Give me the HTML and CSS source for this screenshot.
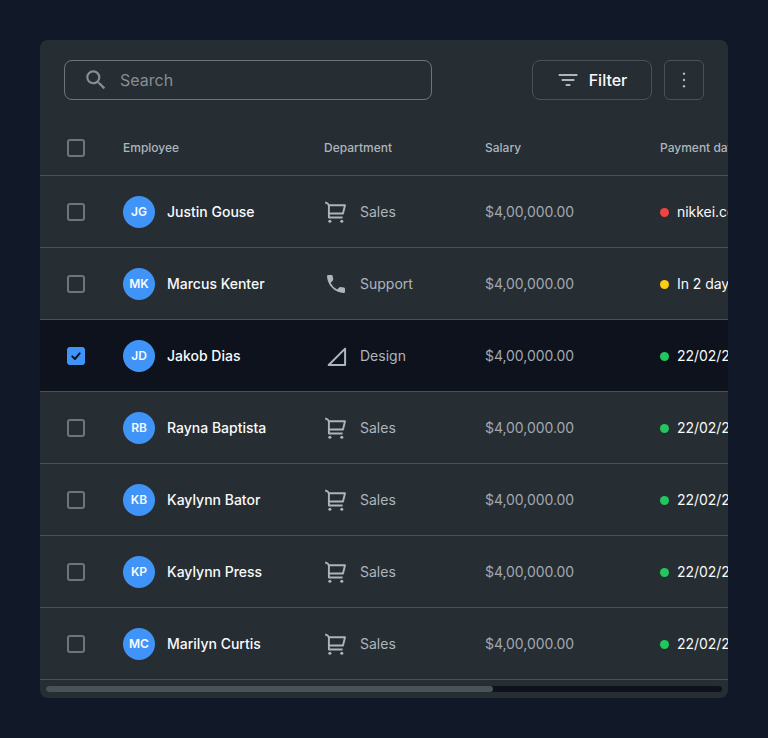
FILE: index.html
```html
<!DOCTYPE html>
<html lang="en">
<head>
<meta charset="utf-8">
<title>Employees</title>
<link rel="stylesheet" href="styles.css">
</head>
<body>
<svg class="defs" aria-hidden="true">
  <symbol id="cart" viewBox="0 0 24 24"><path d="M1.2 2.4L2.9 3.1Q4.9 4 4.9 6V17.5H18.6M4.9 5.3H21L19 13.5H4.9" fill="none" stroke="currentColor" stroke-width="1.9" stroke-linejoin="round"/><circle cx="5.9" cy="21.3" r="1.55"/><circle cx="17.8" cy="21.3" r="1.55"/></symbol>
  <symbol id="phone" viewBox="0 0 24 24"><path d="M4.2 3H7.6Q8.6 3 8.7 4L9.2 7.6Q9.3 8.2 8.9 8.6L6.6 10.9A15 15 0 0 0 13.2 17.4L15.4 15.2Q15.8 14.8 16.4 14.9L20 15.4Q21 15.6 21 16.5V19.8Q21 21 19.8 21C10.8 20.6 3.4 13.2 3 4.2Q3 3 4.2 3z"/></symbol>
  <symbol id="angle" viewBox="0 0 24 24"><path d="M21.1 4.6V21H4.7z" fill="none" stroke="currentColor" stroke-width="2" stroke-linejoin="round"/></symbol>
</svg>
<main class="card">
  <div class="toolbar">
    <label class="search">
      <svg viewBox="0 0 24 24"><path d="M15.5 14h-.79l-.28-.27A6.471 6.471 0 0 0 16 9.5 6.5 6.5 0 1 0 9.5 16c1.61 0 3.09-.59 4.23-1.57l.27.28v.79l5 4.99L20.49 19zm-6 0C7.01 14 5 11.99 5 9.5S7.01 5 9.5 5 14 7.01 14 9.5 11.99 14 9.5 14z"/></svg>
      <input type="text" placeholder="Search">
    </label>
    <button class="btn filter"><svg viewBox="0 0 24 24"><path d="M2.7 6.1h18.7v1.9H2.7zM5.7 11.1h12.7V13H5.7zM9.7 16.1h4.7V18H9.7z"/></svg>Filter</button>
    <button class="btn more" aria-label="More"><svg viewBox="0 0 24 24"><circle cx="12" cy="5.7" r="1.2"/><circle cx="12" cy="12" r="1.2"/><circle cx="12" cy="18.3" r="1.2"/></svg></button>
  </div>
  <div class="row head"><span class="box"></span><span>Employee</span><span>Department</span><span>Salary</span><span>Payment date</span></div>
  <div class="row"><span class="box"></span><div class="person"><span class="avatar">JG</span>Justin Gouse</div><div class="dept"><svg><use href="#cart"/></svg>Sales</div><span class="salary">$4,00,000.00</span><div class="pay red">nikkei.com</div></div>
  <div class="row"><span class="box"></span><div class="person"><span class="avatar">MK</span>Marcus Kenter</div><div class="dept"><svg><use href="#phone"/></svg>Support</div><span class="salary">$4,00,000.00</span><div class="pay yellow">In 2 days</div></div>
  <div class="row selected"><span class="box checked"><svg viewBox="0 0 18 18"><path d="M5.3 9.4l2.6 2.6 4.8-5.6"/></svg></span><div class="person"><span class="avatar">JD</span>Jakob Dias</div><div class="dept"><svg><use href="#angle"/></svg>Design</div><span class="salary">$4,00,000.00</span><div class="pay">22/02/2022</div></div>
  <div class="row"><span class="box"></span><div class="person"><span class="avatar">RB</span>Rayna Baptista</div><div class="dept"><svg><use href="#cart"/></svg>Sales</div><span class="salary">$4,00,000.00</span><div class="pay">22/02/2022</div></div>
  <div class="row"><span class="box"></span><div class="person"><span class="avatar">KB</span>Kaylynn Bator</div><div class="dept"><svg><use href="#cart"/></svg>Sales</div><span class="salary">$4,00,000.00</span><div class="pay">22/02/2022</div></div>
  <div class="row"><span class="box"></span><div class="person"><span class="avatar">KP</span>Kaylynn Press</div><div class="dept"><svg><use href="#cart"/></svg>Sales</div><span class="salary">$4,00,000.00</span><div class="pay">22/02/2022</div></div>
  <div class="row"><span class="box"></span><div class="person"><span class="avatar">MC</span>Marilyn Curtis</div><div class="dept"><svg><use href="#cart"/></svg>Sales</div><span class="salary">$4,00,000.00</span><div class="pay">22/02/2022</div></div>
  <div class="track"><div class="thumb"></div></div>
</main>
</body>
</html>
```
FILE: styles.css
```css
* { box-sizing: border-box; }
body {
  margin: 0;
  padding: 40px;
  background: #111827;
  font-family: Inter, "Liberation Sans", sans-serif;
  color: #f9fafb;
}
svg { fill: currentColor; flex: none; }
.defs { display: none; }
.card {
  width: 688px;
  height: 658px;
  overflow: hidden;
  border-radius: 8px;
  background: #262d33;
}
.toolbar {
  display: flex;
  height: 80px;
  padding: 20px 24px;
}
.search {
  display: flex;
  align-items: center;
  width: 368px;
  height: 40px;
  margin-right: auto;
  padding-left: 18px;
  border: 1px solid #6c757d;
  border-radius: 8px;
  color: #868e96;
}
.search svg { width: 26px; height: 26px; }
.search input {
  width: 280px;
  margin-left: 11px;
  padding: 0;
  border: 0;
  outline: 0;
  background: none;
  color: inherit;
  font: 400 16px Inter, sans-serif;
}
.search input::placeholder { color: #868e96; opacity: 1; }
.btn {
  display: flex;
  align-items: center;
  justify-content: center;
  height: 40px;
  padding: 0;
  border: 1px solid #495057;
  border-radius: 8px;
  background: none;
  color: #f9fafb;
  font: 500 16px Inter, sans-serif;
}
.btn svg { width: 24px; height: 24px; color: #adb5bd; }
.filter { width: 120px; gap: 8px; }
.filter svg { margin: 0 0.5px 0 -0.5px; }
.more { width: 40px; margin-left: 12px; border-radius: 6px; }
.row {
  display: grid;
  grid-template-columns: 56px 201px 161px 175px 160px;
  align-items: center;
  height: 72px;
  padding-left: 27px;
  border-bottom: 1px solid #495057;
  font-size: 14px;
  white-space: nowrap;
}
.head {
  height: 56px;
  color: #adb5bd;
  font-size: 12px;
  font-weight: 500;
}
.selected { background: #0d121c; }
.box {
  width: 18px;
  height: 18px;
  margin-top: 1px;
  border: 2px solid #6c757d;
  border-radius: 3px;
}
.checked { border: 0; background: #4094f7; }
.checked svg {
  display: block;
  width: 18px;
  height: 18px;
  fill: none;
  stroke: #0d121c;
  stroke-width: 2;
  stroke-linecap: round;
  stroke-linejoin: round;
}
.person, .dept, .pay { display: flex; align-items: center; }
.person { gap: 12px; font-weight: 500; }
.avatar {
  display: flex;
  align-items: center;
  justify-content: center;
  width: 32px;
  height: 32px;
  border-radius: 50%;
  background: #4094f7;
  font-size: 12px;
  font-weight: 600;
}
.dept { height: 24px; gap: 12px; color: #adb5bd; }
.dept svg { width: 24px; height: 24px; margin-top: 1px; }
.salary { color: #a1a8b0; letter-spacing: -0.05px; }
.pay { gap: 8px; letter-spacing: -0.05px; }
.pay::before {
  content: "";
  width: 9px;
  height: 9px;
  margin-top: 1px;
  border-radius: 50%;
  background: #22c55e;
}
.red::before { background: #ef4444; }
.yellow::before { background: #facc15; }
.track {
  height: 6px;
  margin: 6px;
  border-radius: 3px;
  background: #0d121c;
}
.thumb {
  width: 447px;
  height: 6px;
  border-radius: 3px;
  background: #495259;
}
```
